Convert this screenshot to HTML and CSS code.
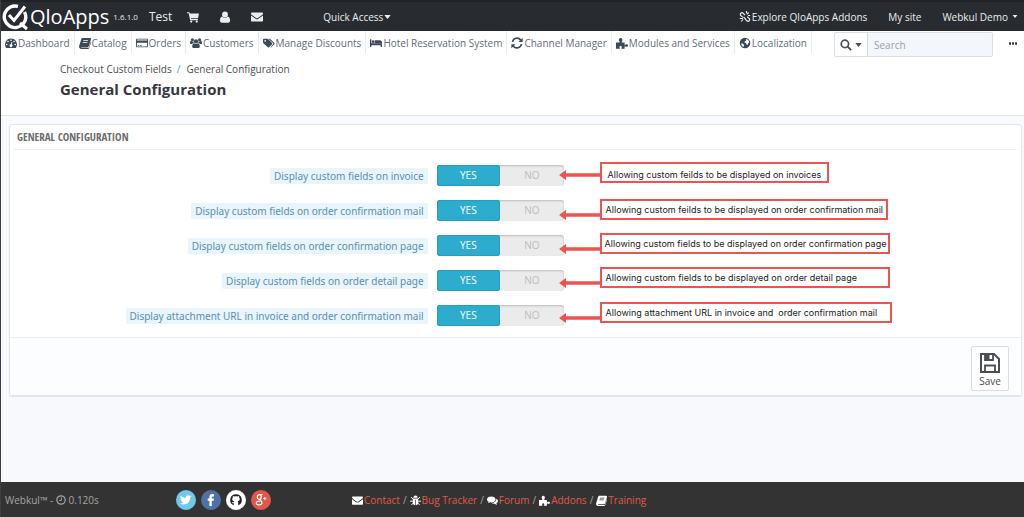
FILE: index.html
```html
<!DOCTYPE html>
<html lang="en">
<head>
<meta charset="utf-8">
<title>General Configuration</title>
<link rel="stylesheet" href="styles.css">
</head>
<body>
<svg class="sprite" aria-hidden="true">
  <symbol id="i-cart" viewBox="0 0 16 16"><path d="M0 1.500h3.200l.5 1.700H16l-1.300 6.300H5.200l.3 1.200h9v1.500H4.200L2.200 3H0z"/><circle cx="5.600" cy="14" r="1.500"/><circle cx="13" cy="14" r="1.500"/></symbol>
  <symbol id="i-user" viewBox="0 0 16 16"><circle cx="8" cy="4.600" r="3.900"/><path d="M4.200 7.400c2 2.200 5.600 2.200 7.600 0C14 8 14.800 10.500 14.800 12.800c0 1.700-1 2.700-2.600 2.700H3.800c-1.600 0-2.600-1-2.600-2.700C1.200 10.500 2 8 4.200 7.400z"/></symbol>
  <symbol id="i-mail" viewBox="0 0 16 16"><path d="M0 3.300C0 2.500.6 2 1.400 2h13.200c.8 0 1.400.5 1.400 1.300 0 1-.8 1.900-1.700 2.500L9.200 9.300c-.9.600-1.500.6-2.400 0L1.700 5.800C.9 5.200 0 4.300 0 3.300z"/><path d="M0 6l6.200 4.400c1.300.9 2.300.9 3.600 0L16 6v6.600c0 .8-.6 1.400-1.400 1.400H1.400C.6 14 0 13.400 0 12.600z"/></symbol>
  <symbol id="i-link" viewBox="0 0 16 16"><g fill="none" stroke="currentColor" stroke-width="1.500"><path d="M8 5.500L5.500 3C3.500 1 .5 4 2.500 6L5 8.500M8 10.500l2.500 2.500c2 2 5-1 3-3L11 7.500M6 8l3 3M10.500 4.500L13 2M12 6h3M10 3V0M5.500 11L3 14M5 10H1"/></g></symbol>
  <symbol id="i-dash" viewBox="0 0 16 16"><path fill-rule="evenodd" d="M8 2a8 8 0 0 0-6.700 12.300l.4.200h12.600l.4-.2A8 8 0 0 0 8 2zM8 3.200a1.100 1.100 0 1 1 0 2.200 1.100 1.100 0 0 1 0-2.200zM4 4.900a1.100 1.100 0 1 1 0 2.200 1.100 1.100 0 0 1 0-2.200zM2.300 8.900a1.100 1.100 0 1 1 0 2.200 1.100 1.100 0 0 1 0-2.200zM12 4.900a1.100 1.100 0 1 1 0 2.200 1.100 1.100 0 0 1 0-2.200zM13.700 8.900a1.100 1.100 0 1 1 0 2.200 1.100 1.100 0 0 1 0-2.200zM8.800 6.200l1 .3-.8 3.300a1.900 1.900 0 1 1-1.200-.3z"/></symbol>
  <symbol id="i-book" viewBox="0 0 16 16"><path fill-rule="evenodd" d="M5 1.200h9.500c1.100 0 1.700.8 1.400 1.900l-2.700 9c-.3.900-1 1.400-2 1.400H2.700c.2.700.7.900 1.500.9h8c.6 0 .9-.3 1.100-.9L15.600 6c.5.500.5 1 .3 1.600l-2.400 7c-.3.800-1 1.300-1.800 1.300H3.100C1 15.900-.5 14 .2 12.100L3 3c.3-1.100.9-1.800 2-1.800zM5.900 4l-.3 1h6.200l.3-1zM5.100 6.600l-.3 1H11l.3-1z"/></symbol>
  <symbol id="i-card" viewBox="0 0 18 16"><path fill-rule="evenodd" d="M1.500 1.500h15c.8 0 1.500.7 1.500 1.500v10c0 .8-.7 1.500-1.500 1.500h-15C.7 14.500 0 13.800 0 13V3c0-.8.7-1.500 1.500-1.500zM1.300 2.700v1.600h15.400V2.700zM1.300 7.500v5.800h15.400V7.500zM2.500 11h2v1h-2zM5.600 11h3v1h-3z"/></symbol>
  <symbol id="i-users" viewBox="0 0 18 16"><circle cx="9" cy="5.600" r="3.200"/><circle cx="3.600" cy="3" r="2.300"/><circle cx="14.400" cy="3" r="2.300"/><path d="M6 8.200c1.800 1.500 4.200 1.500 6 0 1.900.3 2.700 2.600 2.700 5 0 1.400-.9 2.300-2.200 2.300h-7c-1.300 0-2.200-.9-2.200-2.300 0-2.400.8-4.700 2.700-5zM0 8.300c0-2 .3-3.500 1.600-3.600 1 .9 2.300 1.100 3.500.6-.1 1.100.2 2 .8 2.800-1.200 0-2.100.5-2.900 1.500H1.600C.6 9.600 0 9.100 0 8.300zM18 8.300c0-2-.3-3.500-1.600-3.600-1 .9-2.300 1.100-3.500.6.1 1.100-.2 2-.8 2.800 1.200 0 2.100.5 2.900 1.500h1.400c1 0 1.600-.5 1.600-1.300z"/></symbol>
  <symbol id="i-tags" viewBox="0 0 18 16"><path fill-rule="evenodd" d="M1.200 1.500h5c.6 0 1.300.3 1.700.7l5.800 5.800c.5.500.5 1.200 0 1.700l-4.700 4.700c-.5.500-1.200.5-1.700 0L1 8.600C.4 8.100 0 7.200 0 6.600v-4c0-.7.5-1.100 1.200-1.100zM3.300 3.400a1.300 1.300 0 1 0 0 2.600 1.300 1.300 0 0 0 0-2.600z"/><path d="M8 1.500h1.500c.6 0 1.300.3 1.700.7L17 8c.5.500.5 1.200 0 1.700l-4.700 4.700c-.4.400-.9.500-1.400.2l4.200-4.700c.6-.6.600-1.300 0-1.900z"/></symbol>
  <symbol id="i-bed" viewBox="0 0 18 16"><path d="M0 2.500h2v6h16v5.500h-2v-2.500H2V14H0z"/><circle cx="4.700" cy="6" r="2.100"/><path d="M7.200 4h7.500c2 0 3.300 1.300 3.300 4.200H7.200z"/></symbol>
  <symbol id="i-sync" viewBox="0 0 16 16"><path fill="none" stroke="currentColor" stroke-width="2.200" d="M2 6.500A6.200 6.200 0 0 1 13 4M14 9.500A6.200 6.200 0 0 1 3 12"/><path d="M15.500 1v5.500H10zM.5 15V9.500H6z"/></symbol>
  <symbol id="i-puzzle" viewBox="0 0 16 16"><path d="M0 7.200h4.200c.8 0 .9-.7.400-1.300C3 4 4 1.200 6.200 1.200S9.400 4 7.900 5.900c-.5.700-.3 1.300.5 1.300h3v2.600c0 .8.600 1 1.200.5 1.600-1.300 3.400-.5 3.400 1.100s-1.800 2.400-3.400 1.100c-.6-.5-1.200-.3-1.200.5v2.700H7.600c-.6 0-.7-.5-.3-1 1-1.300.3-2.600-1.100-2.600s-2.200 1.300-1.200 2.600c.4.500.2 1-.4 1H0z"/></symbol>
  <symbol id="i-globe" viewBox="0 0 16 16"><path fill-rule="evenodd" d="M8 1a7 7 0 1 0 0 14A7 7 0 0 0 8 1zm1.500 1.500c2.500.6 4 2.500 4.200 4.800l-1.500 1-.7 2.200-1.800-.7-.3-2-2-.3.4-1.700 1.700-.7zM3.200 8l2 1 1.500 1.500-.6 2.700C4 12.500 2.700 10.500 3.200 8z"/></symbol>
  <symbol id="i-search" viewBox="0 0 16 16"><circle cx="6.500" cy="6.500" r="4.900" fill="none" stroke="currentColor" stroke-width="2.300"/><path d="M9 10.700L10.700 9l5 5-1.700 1.700z"/></symbol>
  <symbol id="i-caret" viewBox="0 0 8 5"><path d="M0 0h8L4 5z"/></symbol>
  <symbol id="i-clock" viewBox="0 0 16 16"><circle cx="8" cy="8" r="6.700" fill="none" stroke="currentColor" stroke-width="1.900"/><path fill="none" stroke="currentColor" stroke-width="1.600" d="M8.500 4v4.800H5"/></symbol>
  <symbol id="i-bug" viewBox="0 0 16 16"><path d="M4.800 4a3.200 3.200 0 0 1 6.400 0zM4 5h8v7c-1 2-2.200 2.800-3.500 3V7h-1v8C6.200 14.800 5 14 4 12z"/><path fill="none" stroke="currentColor" stroke-width="1.400" d="M1.500 3l3 3M14.500 3l-3 3M0 9h4M12 9h4M2 14.500L5 11.500M14 14.500l-3-3"/></symbol>
  <symbol id="i-chat" viewBox="0 0 18 16"><path d="M7 1.500c3.900 0 7 2.100 7 4.800s-3.100 4.800-7 4.800c-.6 0-1.200 0-1.700-.1-1 .8-2.400 1.400-3.800 1.500.7-.7 1.200-1.400 1.400-2.300C1.100 9.300 0 7.900 0 6.300c0-2.700 3.100-4.800 7-4.800z"/><path d="M15.200 5.300C17 6.100 18 7.400 18 9c0 1.500-1 2.900-2.700 3.700.2.800.6 1.500 1.300 2.100-1.500-.1-2.900-.6-3.800-1.500-2 .3-4 0-5.600-1.100 4.500 0 8.300-2.600 8-6.900z"/></symbol>
  <symbol id="i-save" viewBox="0 0 20 20"><path fill="none" stroke="currentColor" stroke-width="2" d="M1 1h13l5 5v13H1z"/><path fill="none" stroke="currentColor" stroke-width="1.800" d="M5 19v-6.500h10V19M5 1v6h8V1"/><path d="M5 1h4.500v6H5z"/></symbol>
  <symbol id="i-arrow" viewBox="0 0 42 10"><path d="M0 5l7-5v3.300h35v3.400H7V10z"/></symbol>
</svg>

<header class="topbar">
  <a class="brand" href="#">
    <svg class="brand-mark" viewBox="0 0 28 28" aria-hidden="true"><g fill="none" stroke="#fff"><path stroke-width="3.400" d="M17 3.400A10.800 10.800 0 1 0 22.500 20.500A10.800 10.800 0 0 0 23.500 9"/><path stroke-width="3" d="M8 12l5 5.500L24 3.500M19 20l7 6"/></g></svg>
    <span class="brand-name">QloApps</span>
  </a>
  <span class="version">1.6.1.0</span>
  <a class="shop" href="#">Test</a>
  <nav class="quick-icons" aria-label="Notifications">
    <a href="#" aria-label="Orders"><svg class="icon"><use href="#i-cart"/></svg></a>
    <a href="#" aria-label="Customers"><svg class="icon"><use href="#i-user"/></svg></a>
    <a href="#" aria-label="Messages"><svg class="icon"><use href="#i-mail"/></svg></a>
  </nav>
  <button class="top-button" type="button">Quick Access<svg class="caret"><use href="#i-caret"/></svg></button>
  <nav class="top-links" aria-label="Account">
    <a href="#"><svg class="icon"><use href="#i-link"/></svg>Explore QloApps Addons</a>
    <a href="#">My site</a>
    <button class="top-button" type="button">Webkul Demo <svg class="caret small"><use href="#i-caret"/></svg></button>
  </nav>
</header>

<div class="page-head">
  <div class="menu-row">
    <nav class="menu" aria-label="Main">
      <a href="#"><svg class="icon"><use href="#i-dash"/></svg>Dashboard</a>
      <a href="#"><svg class="icon"><use href="#i-book"/></svg>Catalog</a>
      <a href="#"><svg class="icon"><use href="#i-card"/></svg>Orders</a>
      <a href="#"><svg class="icon"><use href="#i-users"/></svg>Customers</a>
      <a href="#"><svg class="icon"><use href="#i-tags"/></svg>Manage Discounts</a>
      <a href="#"><svg class="icon"><use href="#i-bed"/></svg>Hotel Reservation System</a>
      <a href="#"><svg class="icon"><use href="#i-sync"/></svg>Channel Manager</a>
      <a href="#"><svg class="icon"><use href="#i-puzzle"/></svg>Modules and Services</a>
      <a href="#"><svg class="icon"><use href="#i-globe"/></svg>Localization</a>
    </nav>
    <form class="search">
      <button type="button" aria-label="Search in"><svg class="icon"><use href="#i-search"/></svg><svg class="caret"><use href="#i-caret"/></svg></button>
      <input type="text" placeholder="Search" aria-label="Search">
    </form>
    <button class="more" type="button" aria-label="More"><span></span><span></span><span></span></button>
  </div>
  <div class="title-block">
    <nav class="crumbs" aria-label="Breadcrumb"><a href="#">Checkout Custom Fields</a><span class="slash">/</span><a href="#">General Configuration</a></nav>
    <h1>General Configuration</h1>
  </div>
</div>

<main>
  <form class="panel">
    <h2>General Configuration</h2>
    <div class="rows">
      <div class="row">
        <div class="name"><span id="l1">Display custom fields on invoice</span></div>
        <div class="field">
          <div class="switch" role="radiogroup" aria-labelledby="l1"><input type="radio" name="f1" id="y1" checked><label for="y1">YES</label><input type="radio" name="f1" id="n1"><label for="n1">NO</label></div>
          <svg class="arrow a1"><use href="#i-arrow"/></svg><p class="note n1">Allowing custom feilds to be displayed on invoices</p>
        </div>
      </div>
      <div class="row">
        <div class="name"><span id="l2">Display custom fields on order confirmation mail</span></div>
        <div class="field">
          <div class="switch" role="radiogroup" aria-labelledby="l2"><input type="radio" name="f2" id="y2" checked><label for="y2">YES</label><input type="radio" name="f2" id="n2"><label for="n2">NO</label></div>
          <svg class="arrow a2"><use href="#i-arrow"/></svg><p class="note n2">Allowing custom feilds to be displayed on order confirmation mail</p>
        </div>
      </div>
      <div class="row">
        <div class="name"><span id="l3">Display custom fields on order confirmation page</span></div>
        <div class="field">
          <div class="switch" role="radiogroup" aria-labelledby="l3"><input type="radio" name="f3" id="y3" checked><label for="y3">YES</label><input type="radio" name="f3" id="n3"><label for="n3">NO</label></div>
          <svg class="arrow a3"><use href="#i-arrow"/></svg><p class="note n3">Allowing custom fields to be displayed on order confirmation page</p>
        </div>
      </div>
      <div class="row">
        <div class="name"><span id="l4">Display custom fields on order detail page</span></div>
        <div class="field">
          <div class="switch" role="radiogroup" aria-labelledby="l4"><input type="radio" name="f4" id="y4" checked><label for="y4">YES</label><input type="radio" name="f4" id="n4"><label for="n4">NO</label></div>
          <svg class="arrow a4"><use href="#i-arrow"/></svg><p class="note n4">Allowing custom fields to be displayed on order detail page</p>
        </div>
      </div>
      <div class="row">
        <div class="name"><span id="l5">Display attachment URL in invoice and order confirmation mail</span></div>
        <div class="field">
          <div class="switch" role="radiogroup" aria-labelledby="l5"><input type="radio" name="f5" id="y5" checked><label for="y5">YES</label><input type="radio" name="f5" id="n5"><label for="n5">NO</label></div>
          <svg class="arrow a5"><use href="#i-arrow"/></svg><p class="note n5">Allowing attachment URL in invoice and&nbsp; order confirmation mail</p>
        </div>
      </div>
    </div>
    <div class="panel-foot">
      <button class="save" type="button"><svg><use href="#i-save"/></svg>Save</button>
    </div>
  </form>
</main>

<footer class="footer">
  <div class="credit">Webkul™ - <svg class="icon"><use href="#i-clock"/></svg> 0.120s</div>
  <div class="social">
    <a class="tw" href="#" aria-label="Twitter"><svg viewBox="0 0 20 20"><path d="M15.500 6.200c-.5.200-.9.300-1.300.4.500-.3.800-.8 1-1.300-.5.300-1 .5-1.500.6a2.400 2.400 0 0 0-4 2.200C7.700 8 5.900 7 4.700 5.500c-.7 1.100-.3 2.500.7 3.200-.4 0-.8-.1-1.100-.3 0 1.200.8 2.200 1.900 2.400-.4.100-.7.100-1.100 0 .3 1 1.200 1.700 2.300 1.700-1 .8-2.200 1.200-3.500 1 4.800 2.900 10.500-.3 10.400-5.900.5-.3.900-.8 1.200-1.400z"/></svg></a>
    <a class="fb" href="#" aria-label="Facebook"><svg viewBox="0 0 20 20"><path d="M13 4.200v2.200h-1.300c-.6 0-.9.300-.9.900v1.300H13l-.3 2.200h-1.900V16H8.400v-5.200H6.700V8.600h1.700V7c0-1.800 1.100-2.900 2.900-2.900z"/></svg></a>
    <a class="gh" href="#" aria-label="GitHub"><svg viewBox="0 0 20 20"><path fill-rule="evenodd" d="M10 4.300a5.700 5.700 0 0 0-2.200 11v-2.100c-1.200.2-1.700-.3-2-1 1 .2 1.300.3 2-.2.100-.5.300-.8.500-.9C6 10.800 5.800 8.500 6.900 7.400c-.1-.5-.1-1 .1-1.500.6 0 1.200.3 1.600.6.9-.2 1.900-.2 2.800 0 .4-.3 1-.6 1.600-.6.200.5.200 1 .1 1.500 1.100 1.100.9 3.400-1.400 3.700.4.400.5.900.5 1.500v2.700a5.700 5.700 0 0 0-2.200-11z"/></svg></a>
    <a class="gp" href="#" aria-label="Google Plus"><svg viewBox="0 0 20 20"><g fill="none" stroke="#fff" stroke-width="1.200"><ellipse cx="8.300" cy="7" rx="2" ry="2.300"/><path d="M11.500 4.500H8.300M9.500 9c-2 1 1.800 1.700 1.500 4-.3 2.500-5.700 2.300-5.700 0 0-1.500 2-2.100 4-2M12.300 8.500h3M13.800 7v3"/></g></svg></a>
  </div>
  <nav class="foot-links" aria-label="Footer">
    <a href="#"><svg class="icon"><use href="#i-mail"/></svg>Contact</a><span>/</span>
    <a href="#"><svg class="icon"><use href="#i-bug"/></svg>Bug Tracker</a><span>/</span>
    <a href="#"><svg class="icon"><use href="#i-chat"/></svg>Forum</a><span>/</span>
    <a href="#"><svg class="icon"><use href="#i-puzzle"/></svg>Addons</a><span>/</span>
    <a href="#"><svg class="icon"><use href="#i-book"/></svg>Training</a>
  </nav>
</footer>
</body>
</html>
```

FILE: styles.css
```css
* { box-sizing: border-box; }

body {
  margin: 0;
  min-height: 100vh;
  display: flex;
  flex-direction: column;
  background: #f8f9fd;
  border-left: 1px solid #3c3f44;
  color: #4a4e55;
  font: 10px/16px "Open Sans", "Noto Sans", sans-serif;
}

a { color: inherit; text-decoration: none; }
button, input { font: inherit; color: inherit; }
button { background: none; border: 0; padding: 0; }
svg { fill: currentColor; flex: none; }
.sprite { position: absolute; width: 0; height: 0; }
.icon { width: 12px; height: 12px; }
.caret { width: 7px; height: 4px; }
.caret.small { width: 6px; height: 3px; }

/* Top bar */
.topbar {
  display: flex;
  align-items: center;
  height: 31px;
  padding-right: 6px;
  background: #282b30;
  border-top: 2px solid #1f2124;
  color: #eceded;
  white-space: nowrap;
}
.brand { display: flex; align-items: center; gap: 1px; color: #fff; }
.brand-mark { width: 28px; height: 28px; }
.brand-name { font-size: 20px; line-height: 28px; }
.version { margin-left: 4px; font-size: 8px; }
.shop { margin-left: 11px; font-size: 12px; }
.quick-icons { display: flex; gap: 20px; margin-left: 15px; }
.quick-icons a { display: flex; }
.top-button { display: flex; align-items: center; gap: 1px; }
.topbar > .top-button { margin-left: 60px; }
.top-links { display: flex; gap: 21px; margin-left: auto; }
.top-links a { display: flex; align-items: center; gap: 1px; }
.top-links .top-button { gap: 4px; }

/* Menu and title */
.page-head { background: #fff; border-bottom: 1px solid #e1e5ec; padding-bottom: 16px; }
.menu-row { display: flex; align-items: flex-start; }
.menu { display: flex; color: #5f6b80; white-space: nowrap; }
.menu a {
  display: flex;
  align-items: center;
  gap: 1px;
  height: 23px;
  padding: 0 4px;
  border-right: 1px solid #e8ebf0;
}
.menu .icon { color: #3d4858; }
.search { display: flex; height: 25px; margin: 1px 0 0 auto; border: 1px solid #d8dfe8; border-radius: 2px; }
.search button { display: flex; align-items: center; justify-content: center; gap: 3px; width: 32px; }
.search input { width: 125px; padding: 0 6px; border: 0; border-left: 1px solid #d0dae5; background: #f3f6fa; }
.search input::placeholder { color: #9a9fa6; opacity: 1; }
.more { display: flex; gap: 1px; margin: 11px 7px 0 16px; }
.more span { width: 2px; height: 3px; border-radius: 1px; background: #333840; }
.title-block { padding: 4px 0 0 59px; }
.crumbs { display: flex; color: #4a4e55; }
.slash { margin: 0 6px 0 5px; color: #4a9cc0; }
h1 { margin: 2px 0 0; color: #34383e; font-size: 15px; line-height: 20px; font-weight: 700; }

/* Panel */
main { flex: 1; padding: 8px 2px 8px 8px; }
.panel { background: #fff; border: 1px solid #dfe5ef; border-radius: 3px; box-shadow: 0 1px 1px #dfe5ef; }
h2 {
  margin: 0 4px;
  padding: 4px 3px;
  border-bottom: 1px solid #eceef1;
  color: #6c6c6c;
  font: 11px/16px "Open Sans Condensed", "Roboto Condensed", "Liberation Sans", sans-serif;
  text-transform: uppercase;
}
.rows { padding: 8px 0 4px; }
.row { display: grid; grid-template-columns: 42% 1fr; align-items: center; height: 35px; }
.name { display: flex; justify-content: flex-end; padding-right: 7px; font-family: "Noto Sans", sans-serif; }
.name span { padding: 0 4px; border-radius: 2px; background: #eaf4fb; color: #5790b3; }
.field { position: relative; display: flex; align-items: center; height: 35px; padding-left: 2px; }
.switch { display: flex; width: 127px; height: 21px; border-radius: 3px; background: #ebebeb; box-shadow: inset 0 1px 2px #bbb; }
.switch input { position: absolute; opacity: 0; }
.switch label { flex: 1; border-radius: 3px; line-height: 21px; text-align: center; color: #bcbcbc; }
.switch input:checked + label { background: #2eacce; color: #fff; box-shadow: inset 0 0 0 1px #279dbd; }

/* Callouts drawn over the form */
.arrow { position: absolute; left: 124px; width: 42px; height: 10px; color: #ef5350; }
.note {
  position: absolute;
  left: 165px;
  height: 21px;
  margin: 0;
  padding-left: 4px;
  border: 2px solid #ef5350;
  background: #fff;
  color: #1c1c1c;
  font: 9px/17px Inter, "Liberation Sans", sans-serif;
  white-space: nowrap;
}
.a1 { top: 12px; }
.a2 { top: 17px; }
.a3 { top: 16px; }
.a4 { top: 15px; }
.a5 { top: 15px; }
.n1 { top: 4px; width: 229px; padding: 2px 0 0 6px; }
.n2 { top: 6px; width: 288px; }
.n3 { top: 5px; width: 290px; padding-left: 3px; }
.n4 { top: 4px; width: 290px; }
.n5 { top: 4px; width: 292px; }

.panel-foot { display: flex; justify-content: flex-end; padding: 8px 12px 4px; border-top: 1px solid #e9eef5; background: #fcfdfe; }
.save {
  display: flex;
  flex-direction: column;
  align-items: center;
  width: 38px;
  height: 45px;
  padding-top: 6px;
  border: 1px solid #d9dde3;
  border-radius: 2px;
  background: #fff;
}
.save svg { width: 20px; height: 20px; }

/* Footer */
.footer { display: flex; align-items: center; height: 35px; padding-top: 1px; background: #333; color: #a5a5a5; }
.credit { display: flex; align-items: center; width: 172px; padding-left: 4px; white-space: pre; }
.credit .icon { width: 10px; height: 10px; }
.social { display: flex; gap: 5px; padding-left: 3px; width: 179px; }
.social a { display: flex; width: 20px; height: 20px; border-radius: 50%; color: #fff; }
.social svg { width: 20px; height: 20px; }
.social .tw { background: #70c8ea; }
.social .fb { background: #4e71a8; }
.social .gh { background: #fff; color: #222; }
.social .gp { background: #e2574c; }
.foot-links { display: flex; gap: 3px; color: #e2574c; }
.foot-links a { display: flex; align-items: center; gap: 1px; }
.foot-links .icon { width: 11px; height: 11px; color: #fff; }
.foot-links span { color: #a5a5a5; }
```
